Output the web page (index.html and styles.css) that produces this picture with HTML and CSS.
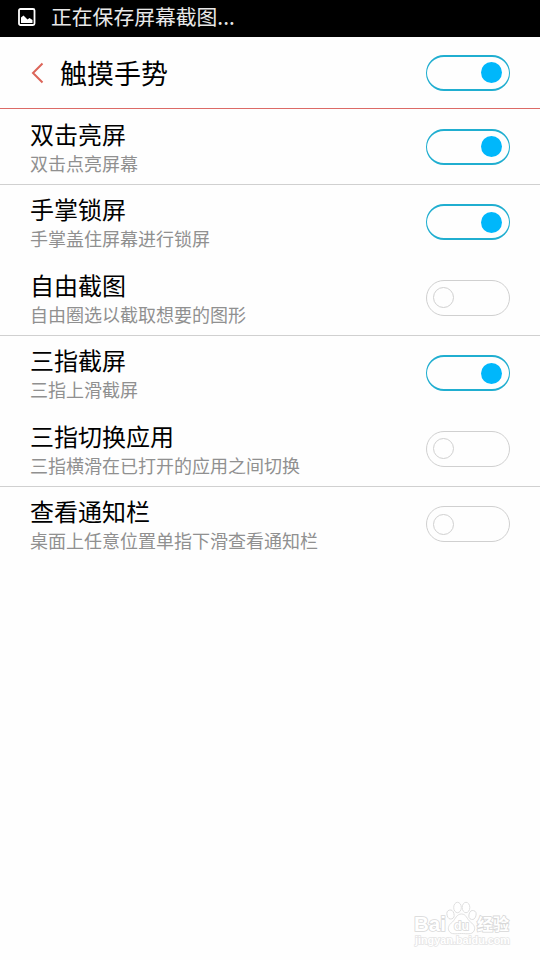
FILE: index.html
```
<!DOCTYPE html>
<html lang="zh-CN">
<head>
<meta charset="UTF-8">
<meta name="viewport" content="width=device-width, initial-scale=1.0">
<title>触摸手势</title>
<link rel="stylesheet" href="styles.css">
</head>
<body>
<div class="status-bar">
  <svg class="status-icon" width="18" height="18" viewBox="0 0 18 18">
    <rect x="1" y="1" width="15.500" height="16" rx="1.500" fill="none" stroke="#fff" stroke-width="1.800"/>
    <path d="M3 15V9.500l2.500-2 4 4 2-1.500 3 2V15z" fill="#fff"/>
  </svg>
  <span>正在保存屏幕截图...</span>
</div>

<header class="header">
  <svg class="back" width="13" height="22" viewBox="0 0 13 22">
    <path d="M11.500 1.500L2 11l9.500 9.500" fill="none" stroke="#dc6559" stroke-width="2"/>
  </svg>
  <h1>触摸手势</h1>
  <div class="switch on"></div>
</header>

<main class="list">
  <div class="item line">
    <div class="text">
      <h2>双击亮屏</h2>
      <p>双击点亮屏幕</p>
    </div>
    <div class="switch on"></div>
  </div>
  <div class="item">
    <div class="text">
      <h2>手掌锁屏</h2>
      <p>手掌盖住屏幕进行锁屏</p>
    </div>
    <div class="switch on"></div>
  </div>
  <div class="item line">
    <div class="text">
      <h2>自由截图</h2>
      <p>自由圈选以截取想要的图形</p>
    </div>
    <div class="switch"></div>
  </div>
  <div class="item">
    <div class="text">
      <h2>三指截屏</h2>
      <p>三指上滑截屏</p>
    </div>
    <div class="switch on"></div>
  </div>
  <div class="item line">
    <div class="text">
      <h2>三指切换应用</h2>
      <p>三指横滑在已打开的应用之间切换</p>
    </div>
    <div class="switch"></div>
  </div>
  <div class="item">
    <div class="text">
      <h2>查看通知栏</h2>
      <p>桌面上任意位置单指下滑查看通知栏</p>
    </div>
    <div class="switch"></div>
  </div>
</main>

<!-- Watermark over the bottom right corner -->
<svg class="watermark" width="104" height="50" viewBox="0 0 104 50">
  <g fill="#fff" stroke="#dcdcdc" stroke-width="0.900">
    <ellipse cx="41.500" cy="14.500" rx="3.500" ry="4.500" transform="rotate(-15 41.500 14.500)"/>
    <ellipse cx="48.500" cy="7.500" rx="3.800" ry="5.200"/>
    <ellipse cx="57" cy="7.500" rx="3.800" ry="5.200"/>
    <ellipse cx="63.500" cy="15" rx="3.500" ry="4.500" transform="rotate(15 63.500 15)"/>
    <path d="M52.500 14c-5 0-6 5-9 8-4 3-5 6-3.500 9 2 4 7.500 2.500 12.500 2.500s10.500 1.500 12.500-2.500c1.500-3 .5-6-3.500-9s-4-8-9-8z"/>
  </g>
  <g class="mark">
    <text x="5" y="31" font-size="20" textLength="32" lengthAdjust="spacingAndGlyphs">Bai</text>
    <text x="45" y="30" font-size="13.500" textLength="15" lengthAdjust="spacingAndGlyphs">du</text>
    <text x="68" y="30" font-size="16" textLength="32">经验</text>
  </g>
  <text class="mark-url" x="6" y="44" font-size="10.500" textLength="95" lengthAdjust="spacingAndGlyphs">jingyan.baidu.com</text>
</svg>
</body>
</html>
```

FILE: styles.css
```
*, *::before {
  box-sizing: border-box;
}

body {
  margin: 0;
  height: 960px;
  overflow: hidden;
  background: #fefefe;
  color: #000;
  font-family: "Noto Sans CJK SC", sans-serif;
}

h1, h2, p {
  margin: 0;
  font-weight: 400;
  white-space: nowrap;
}

/* Status bar */
.status-bar {
  height: 37px;
  padding: 0 18px 3px;
  display: flex;
  align-items: center;
  gap: 15px;
  background: #000;
  color: #e8e8e8;
  font-size: 20.8px;
  line-height: 32px;
}

.status-bar span {
  padding-bottom: 2px;
}

.status-icon {
  flex-shrink: 0;
}

/* Title bar */
.header {
  height: 72px;
  padding: 0 30px 0 31px;
  display: flex;
  align-items: center;
  border-bottom: 1px solid #dc6a66;
}

.header h1 {
  flex: 1;
  margin-left: 16px;
  font-size: 27px;
  line-height: 40px;
}

/* Settings rows */
.item {
  height: 75.5px;
  padding: 1px 30px 0;
  display: flex;
  align-items: center;
  justify-content: space-between;
  border-bottom: 1px solid transparent;
}

.item.line {
  border-bottom-color: #d0d0d0;
}

.text {
  padding-top: 1px;
}

.item h2 {
  font-size: 24px;
  line-height: 32px;
}

.item p {
  color: #909090;
  font-size: 18px;
  line-height: 27px;
}

/* Switch */
.switch {
  width: 84px;
  height: 36px;
  padding: 0 6px;
  display: flex;
  align-items: center;
  flex-shrink: 0;
  border: 1px solid #d0d0d0;
  border-radius: 18px;
}

.switch::before {
  content: "";
  width: 21px;
  height: 21px;
  border: 1px solid #d0d0d0;
  border-radius: 50%;
}

.switch.on {
  justify-content: flex-end;
  border: 1px solid #20aed0;
  border-width: 2px 1px;
  padding-right: 7px;
}

.switch.on::before {
  border: none;
  background: #00b7fb;
}

/* Watermark */
.watermark {
  position: absolute;
  right: 27px;
  bottom: 10px;
  font-family: "Liberation Sans", "Noto Sans CJK SC", sans-serif;
  font-weight: 700;
}

.mark {
  fill: #fff;
  stroke: #d8d8d8;
  stroke-width: 1.6px;
  paint-order: stroke;
}

.mark-url {
  fill: #fff;
  stroke: #e4e4e4;
  stroke-width: 1.4px;
  paint-order: stroke;
}
```
